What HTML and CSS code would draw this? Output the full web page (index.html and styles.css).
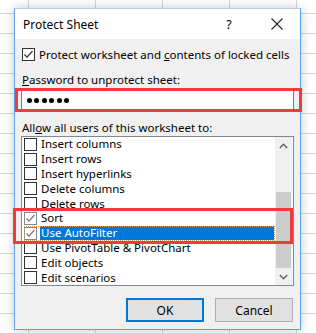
FILE: index.html
```html
<!DOCTYPE html>
<html lang="en">
<head>
    <meta charset="UTF-8">
    <title>Protect Sheet</title>
    <link rel="stylesheet" href="styles.css">
</head>
<body>
    <div class="dialog">
        <div class="titlebar">
            <span class="title">Protect Sheet</span>
            <span class="help">?</span>
            <span class="close">
                <svg width="12" height="12" viewBox="0 0 12 12"><path d="M0.5 0.5 L11.5 11.5 M11.5 0.5 L0.5 11.5" stroke="#222" stroke-width="1.1" fill="none"/></svg>
            </span>
        </div>

        <div class="content">
            <div class="check-row">
                <span class="box">
                    <svg width="11" height="11" viewBox="0 0 11 11"><path d="M1.5 5.5 L4 8.2 L9.5 2" stroke="#333" stroke-width="1.2" fill="none"/></svg>
                </span>
                <span>Protect worksheet and <u>c</u>ontents of locked cells</span>
            </div>

            <div class="label"><u>P</u>assword to unprotect sheet:</div>
            <div class="password">
                <span class="dot"></span><span class="dot"></span><span class="dot"></span>
                <span class="dot"></span><span class="dot"></span><span class="dot"></span>
            </div>

            <div class="label">All<u>o</u>w all users of this worksheet to:</div>
            <div class="listbox">
                <ul class="items">
                    <li><span class="box"></span><span class="text">Insert columns</span></li>
                    <li><span class="box"></span><span class="text">Insert rows</span></li>
                    <li><span class="box"></span><span class="text">Insert hyperlinks</span></li>
                    <li><span class="box"></span><span class="text">Delete columns</span></li>
                    <li><span class="box"></span><span class="text">Delete rows</span></li>
                    <li><span class="box grey"><svg width="11" height="11" viewBox="0 0 11 11"><path d="M1.5 5.5 L4 8.2 L9.5 2" stroke="#777" stroke-width="1.2" fill="none"/></svg></span><span class="text">Sort</span></li>
                    <li class="focused"><span class="box grey"><svg width="11" height="11" viewBox="0 0 11 11"><path d="M1.5 5.5 L4 8.2 L9.5 2" stroke="#777" stroke-width="1.2" fill="none"/></svg></span><span class="text selected">Use AutoFilter</span></li>
                    <li><span class="box"></span><span class="text">Use PivotTable &amp; PivotChart</span></li>
                    <li><span class="box"></span><span class="text">Edit objects</span></li>
                    <li><span class="box"></span><span class="text">Edit scenarios</span></li>
                </ul>
                <div class="scrollbar">
                    <div class="arrow">
                        <svg width="9" height="6" viewBox="0 0 9 6"><path d="M0.8 5 L4.5 1.3 L8.2 5" stroke="#606060" stroke-width="1.4" fill="none"/></svg>
                    </div>
                    <div class="track"><div class="thumb"></div></div>
                    <div class="arrow">
                        <svg width="9" height="6" viewBox="0 0 9 6"><path d="M0.8 1 L4.5 4.7 L8.2 1" stroke="#606060" stroke-width="1.4" fill="none"/></svg>
                    </div>
                </div>
            </div>

            <div class="buttons">
                <button class="btn default">OK</button>
                <button class="btn">Cancel</button>
            </div>
        </div>

        <!-- red annotation boxes -->
        <div class="mark mark-password"></div>
        <div class="mark mark-rows"></div>
    </div>
</body>
</html>
```

FILE: styles.css
```css
body {
    margin: 0;
    width: 316px;
    height: 333px;
    overflow: hidden;
    font-family: 'Noto Sans', 'Open Sans', sans-serif;
    font-size: 11.5px;
    color: #000;
    background-color: #fff;
    background-image:
        repeating-linear-gradient(to right, transparent 0, transparent 28px, #d6d6d6 28px, #d6d6d6 29px, transparent 29px, transparent 67px),
        repeating-linear-gradient(to bottom, transparent 0, transparent 13px, #d6d6d6 13px, #d6d6d6 14px, transparent 14px, transparent 20px);
    background-size: 67px 100%, 100% 20px;
}

.dialog {
    position: relative;
    margin: 8px 0 0 14px;
    width: 285px;
    background: #f0f0f0;
    border: 1px solid #5ba0e4;
    border-top-color: #b9cfe6;
    box-shadow: 0 0 10px rgba(0,0,0,0.22);
}

.titlebar {
    display: flex;
    align-items: center;
    height: 30px;
    background: #fff;
    padding-left: 8px;
}

.title {
    flex: 1;
    font-size: 12px;
}

.help {
    width: 30px;
    margin-right: 9px;
    text-align: center;
    font-size: 12.5px;
}

.close {
    width: 47px;
    display: flex;
    justify-content: center;
}

.content {
    padding: 0 6px 7px 6px;
}

.box {
    display: inline-flex;
    align-items: center;
    justify-content: center;
    box-sizing: border-box;
    width: 13px;
    height: 13px;
    background: #fff;
    border: 1px solid #333;
    flex-shrink: 0;
}

.box.grey {
    border-color: #888;
}

.check-row {
    display: flex;
    align-items: center;
    gap: 4px;
    height: 15px;
    line-height: 14px;
    margin: 8px 0 0 1px;
    white-space: nowrap;
}

.label {
    height: 14px;
    line-height: 14px;
    margin: 11px 0 0 1px;
    white-space: nowrap;
}

.password {
    display: flex;
    align-items: center;
    gap: 2.4px;
    box-sizing: border-box;
    height: 20px;
    margin-top: 3px;
    padding-left: 5px;
    background: #fff;
    border: 1px solid #7a7a7a;
}

.dot {
    width: 5px;
    height: 5px;
    border-radius: 50%;
    background: #000;
}

.listbox {
    display: flex;
    box-sizing: border-box;
    height: 150px;
    margin-top: 1px;
    background: #fff;
    border: 1px solid #828790;
    overflow: hidden;
}

.items {
    flex: 1;
    list-style: none;
    margin: 0;
    padding: 0 0 0 2px;
}

.items li {
    display: flex;
    align-items: center;
    gap: 3px;
    height: 14.8px;
    white-space: nowrap;
}

.items .text {
    padding: 0 1px;
    line-height: 14px;
}

.items .selected {
    flex: 1;
    background: #0078d7;
    color: #fff;
    margin-right: 1px;
}

.items li.focused {
    outline: 1px dotted #c9a46a;
    outline-offset: -1px;
}

.scrollbar {
    display: flex;
    flex-direction: column;
    width: 17px;
    margin-right: 1px;
    background: #f0f0f0;
}

.arrow {
    height: 17px;
    display: flex;
    align-items: center;
    justify-content: center;
}

.track {
    flex: 1;
    padding-top: 38px;
}

.thumb {
    height: 76px;
    margin: 0 1px;
    background: #cdcdcd;
}

.buttons {
    display: flex;
    justify-content: flex-end;
    gap: 11px;
    margin: 12px 1px 0 0;
}

.btn {
    box-sizing: border-box;
    width: 78px;
    height: 24px;
    font-family: inherit;
    font-size: 12px;
    color: #000;
    background: #e1e1e1;
    border: 1px solid #adadad;
    padding: 0;
}

.btn.default {
    border: 2px solid #0078d7;
}

.mark {
    position: absolute;
    box-sizing: border-box;
    border: 3px solid #ee3b3b;
}

.mark-password {
    left: 0;
    top: 79px;
    width: 287px;
    height: 24px;
}

.mark-rows {
    left: -2px;
    top: 199px;
    width: 280px;
    height: 36px;
}
```
